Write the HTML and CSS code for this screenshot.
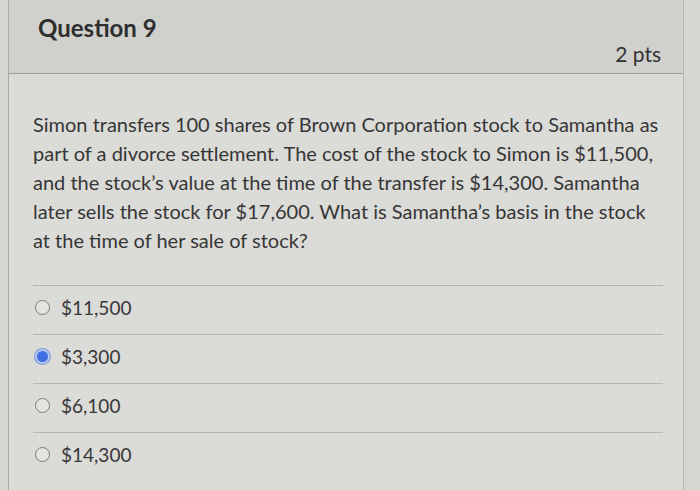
FILE: index.html
```html
<!DOCTYPE html>
<html>
<head>
<meta charset="utf-8">
<link rel="stylesheet" href="styles.css">
</head>
<body>
<div class="card">
  <div class="header">
    <h2 class="title">Question 9</h2>
    <div class="pts">2 pts</div>
  </div>
  <div class="content">
    <p class="question">Simon transfers 100 shares of Brown Corporation stock to Samantha as part of a divorce settlement. The cost of the stock to Simon is $11,500, and the stock’s value at the time of the transfer is $14,300. Samantha later sells the stock for $17,600. What is Samantha’s basis in the stock at the time of her sale of stock?</p>
    <ul class="answers">
      <li class="answer"><span class="radio"></span><span class="label">$11,500</span></li>
      <li class="answer"><span class="radio checked"></span><span class="label">$3,300</span></li>
      <li class="answer"><span class="radio"></span><span class="label">$6,100</span></li>
      <li class="answer"><span class="radio"></span><span class="label">$14,300</span></li>
    </ul>
  </div>
</div>
</body>
</html>
```
FILE: styles.css
```css
html, body {
  margin: 0;
  padding: 0;
  background: #d6d6d3;
  font-family: Lato, "Liberation Sans", sans-serif;
  color: #353535;
}
.card {
  margin-left: 8px;
  width: 676px;
  height: 490px;
  background: #dbdbd8;
  border-left: 1px solid #a8a8a5;
  border-right: 1px solid #b8b8b5;
  box-sizing: border-box;
}
.header {
  height: 74px;
  box-sizing: border-box;
  background: #d0d0cc;
  border-bottom: 1px solid #9c9c99;
  padding: 13px 22px 0 29px;
  display: flex;
  flex-direction: column;
}
.title {
  margin: 0;
  font-size: 24px;
  font-weight: 700;
  line-height: 30px;
  color: #2f2f2f;
}
.pts {
  align-self: flex-end;
  font-size: 21px;
  line-height: 26px;
  margin-top: -2px;
  color: #333;
}
.content {
  padding: 36px 20px 0 24px;
}
.question {
  margin: 0;
  font-size: 20px;
  line-height: 29px;
  color: #363636;
}
.answers {
  list-style: none;
  margin: 30px 0 0 0;
  padding: 0;
}
.answer {
  height: 49px;
  border-top: 1px solid #b6b6b3;
  display: flex;
  align-items: center;
  padding-left: 2px;
  padding-bottom: 6px;
  box-sizing: border-box;
}
.radio {
  width: 15px;
  height: 15px;
  border: 1.5px solid #7a7a78;
  border-radius: 50%;
  box-sizing: border-box;
  background: #e4e4e1;
  margin-right: 11px;
  flex: none;
}
.radio.checked {
  border: 2px solid #b3c6f0;
  background: #3f6fe0;
  box-shadow: 0 0 0 1px #7f9ad8;
}
.label {
  font-size: 19px;
  color: #383838;
}
```
